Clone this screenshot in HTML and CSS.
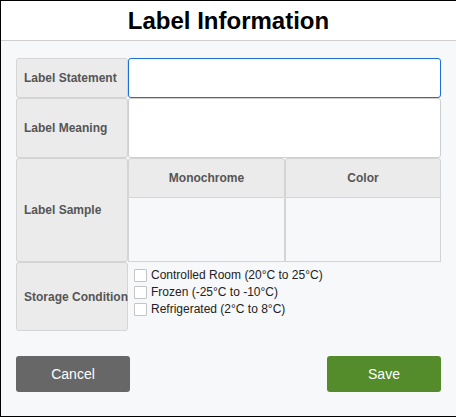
FILE: index.html
```html
<!DOCTYPE html>
<html lang="en">
<head>
    <meta charset="UTF-8">
    <meta name="viewport" content="width=device-width, initial-scale=1.0">
    <title>Label Information</title>
    <link rel="stylesheet" href="styles.css">
</head>
<body>
    <div class="dialog">
        <div class="dialog-header">
            <h2>Label Information</h2>
        </div>

        <div class="dialog-body">
            <!-- label details grid -->
            <div class="label-grid">
                <div class="cell-label row-statement">Label Statement</div>
                <input type="text" class="cell-input input-statement" autofocus>

                <div class="cell-label row-meaning">Label Meaning</div>
                <div class="cell-input input-meaning"></div>

                <div class="cell-label row-sample">Label Sample</div>
                <div class="cell-head">Monochrome</div>
                <div class="cell-head">Color</div>
                <div class="cell-empty"></div>
                <div class="cell-empty"></div>

                <div class="cell-label row-storage">Storage Condition</div>
                <div class="storage-list">
                    <label class="check"><input type="checkbox"> Controlled Room (20°C to 25°C)</label>
                    <label class="check"><input type="checkbox"> Frozen (-25°C to -10°C)</label>
                    <label class="check"><input type="checkbox"> Refrigerated (2°C to 8°C)</label>
                </div>
            </div>

            <div class="actions">
                <button class="btn btn-cancel">Cancel</button>
                <button class="btn btn-save">Save</button>
            </div>
        </div>
    </div>
</body>
</html>
```

FILE: styles.css
```css
html, body {
    margin: 0;
    padding: 0;
}
body {
    font-family: 'Liberation Sans', Arial, sans-serif;
    background-color: #f7f8fa;
}
.dialog {
    height: 415px;
    border-top: 1px solid #000;
    border-left: 1px solid #000;
    border-bottom: 1px solid #000;
    background-color: #f7f8fa;
}
.dialog-header {
    height: 39px;
    background: #fff;
    border-bottom: 1px solid #cfcfcf;
    display: flex;
    align-items: center;
    justify-content: center;
}
.dialog-header h2 {
    margin: 0;
    font-size: 24px;
    font-weight: bold;
    color: #000;
}
.dialog-body {
    padding: 17px 14px 0 15px;
}
.label-grid {
    display: grid;
    grid-template-columns: 112px 157px 156px;
    grid-template-rows: 40px 60px 40px 64px 69px;
}
.cell-label {
    grid-column: 1;
    display: flex;
    align-items: center;
    padding-left: 7px;
    white-space: nowrap;
    background: #ebebeb;
    border: 1px solid #d4d4d4;
    border-radius: 3px;
    font-size: 12px;
    font-weight: bold;
    color: #555;
}
.row-statement { grid-row: 1; }
.row-meaning { grid-row: 2; }
.row-sample { grid-row: 3 / span 2; }
.row-storage { grid-row: 5; }
.cell-input {
    grid-column: 2 / span 2;
    box-sizing: border-box;
    margin: 0;
    background: #fff;
    border: 1px solid #cfcfcf;
    border-radius: 3px;
}
.input-statement {
    border-color: #1a6fd8;
    outline: none;
    padding: 0 12px;
    font-family: inherit;
    font-size: 14px;
    caret-color: #000;
    height: 40px;
}
.cell-head {
    display: flex;
    align-items: center;
    justify-content: center;
    background: #ebebeb;
    border: 1px solid #d4d4d4;
    border-radius: 3px 3px 0 0;
    font-size: 12px;
    font-weight: bold;
    color: #555;
}
.cell-empty {
    border: 1px solid #d4d4d4;
    border-top: none;
}
.storage-list {
    grid-column: 2 / span 2;
    display: flex;
    flex-direction: column;
    gap: 3px;
    padding: 6px 0 0 6px;
}
.check {
    display: flex;
    align-items: center;
    gap: 4px;
    font-size: 12px;
    color: #222;
}
.check input {
    appearance: none;
    margin: 0;
    width: 13px;
    height: 13px;
    background: #fff;
    border: 1px solid #c4c4c4;
    border-radius: 1px;
}
.actions {
    display: flex;
    justify-content: space-between;
    margin-top: 25px;
    width: 425px;
}
.btn {
    width: 114px;
    height: 36px;
    border: none;
    border-radius: 3px;
    font-family: inherit;
    font-size: 14px;
    color: #fff;
    cursor: pointer;
}
.btn-cancel {
    background-color: #676767;
}
.btn-save {
    background-color: #548c2b;
}
```
